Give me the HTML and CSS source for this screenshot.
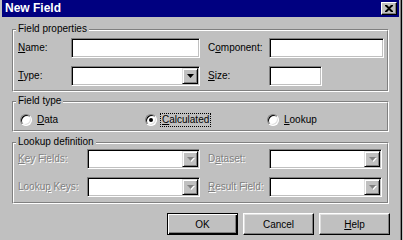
FILE: index.html
```html
<!DOCTYPE html>
<html>
<head>
<meta charset="utf-8">
<title>New Field</title>
<link rel="stylesheet" href="styles.css">
</head>
<body>
<div class="window">
  <div class="titlebar">
    <span class="title">New Field</span>
    <span class="close"><svg width="8" height="7" viewBox="0 0 8 7"><path d="M0 0h2l2 2 2-2h2v1L5.2 3.5 8 6v1H6L4 5 2 7H0V6l2.8-2.5L0 1z" fill="#000"/></svg></span>
  </div>
  <div class="content">
    <div class="group g1">
      <span class="legend">Field properties</span>
      <div class="group-inner grid grid1">
        <label class="lbl"><u>N</u>ame:</label>
        <div class="field w-main"></div>
        <label class="lbl">C<u>o</u>mponent:</label>
        <div class="field w-right"></div>
        <label class="lbl"><u>T</u>ype:</label>
        <div class="field combo w-main"><span class="drop"><svg width="7" height="4" viewBox="0 0 7 4"><path d="M0 0h7L3.5 4z" fill="#000"/></svg></span></div>
        <label class="lbl"><u>S</u>ize:</label>
        <div class="field w-size"></div>
      </div>
    </div>

    <div class="group g2">
      <span class="legend">Field type</span>
      <div class="group-inner radios">
        <div class="radio"><span class="dot"></span><span class="rtext"><u>D</u>ata</span></div>
        <div class="radio checked"><span class="dot"></span><span class="rtext focus"><u>C</u>alculated</span></div>
        <div class="radio"><span class="dot"></span><span class="rtext"><u>L</u>ookup</span></div>
      </div>
    </div>

    <div class="group g3">
      <span class="legend">Lookup definition</span>
      <div class="group-inner grid grid3">
        <label class="lbl disabled"><u>K</u>ey Fields:</label>
        <div class="field combo w-lk"><span class="drop off"><svg width="7" height="4" viewBox="0 0 7 4"><path d="M0 0h7L3.5 4z" fill="#808080"/></svg></span></div>
        <label class="lbl disabled">D<u>a</u>taset:</label>
        <div class="field combo w-lk"><span class="drop off"><svg width="7" height="4" viewBox="0 0 7 4"><path d="M0 0h7L3.5 4z" fill="#808080"/></svg></span></div>
        <label class="lbl disabled">Looku<u>p</u> Keys:</label>
        <div class="field combo w-lk"><span class="drop off"><svg width="7" height="4" viewBox="0 0 7 4"><path d="M0 0h7L3.5 4z" fill="#808080"/></svg></span></div>
        <label class="lbl disabled"><u>R</u>esult Field:</label>
        <div class="field combo w-lk"><span class="drop off"><svg width="7" height="4" viewBox="0 0 7 4"><path d="M0 0h7L3.5 4z" fill="#808080"/></svg></span></div>
      </div>
    </div>

    <div class="buttons">
      <button class="btn default">OK</button>
      <button class="btn">Cancel</button>
      <button class="btn"><u>H</u>elp</button>
    </div>
  </div>
</div>
</body>
</html>
```
FILE: styles.css
```css
* { box-sizing: border-box; }
html, body { margin: 0; padding: 0; }
body {
  width: 403px;
  height: 240px;
  overflow: hidden;
  background: #c0c0c0;
  font-family: "Liberation Sans", Arial, sans-serif;
  font-size: 10px;
  color: #000;
}
u { text-decoration: underline; text-underline-offset: 1px; }

.window {
  width: 402px;
  height: 240px;
  padding: 0 2px;
  border-right: 1px solid #000;
  box-shadow: inset -1px 0 0 #808080;
}

.titlebar {
  height: 17px;
  background: #000080;
  color: #fff;
  display: flex;
  align-items: center;
  justify-content: space-between;
  padding: 0 2px 0 3px;
}
.title { font-weight: bold; font-size: 12px; line-height: 17px; }
.close {
  width: 16px;
  height: 13px;
  background: #c0c0c0;
  border: 1px solid;
  border-color: #fff #000 #000 #fff;
  box-shadow: inset -1px -1px 0 #808080;
  display: flex;
  align-items: center;
  justify-content: center;
}

.content { padding: 0 10px; }

.group {
  position: relative;
  border: 1px solid;
  border-color: #808080 #fff #fff #808080;
}
.group-inner {
  border: 1px solid;
  border-color: #fff #808080 #808080 #fff;
}
.legend {
  position: absolute;
  top: -7px;
  left: 3px;
  padding: 0 2px;
  background: #c0c0c0;
  line-height: 12px;
}
.g1 { margin-top: 12px; }
.g2 { margin-top: 9px; }
.g3 { margin-top: 10px; }

.grid {
  display: grid;
  align-items: center;
  row-gap: 8px;
  padding-left: 4px;
}
.grid1 {
  grid-template-columns: 53px 137px 61px 115px;
  padding-top: 7px;
  padding-bottom: 4px;
}
.grid3 {
  grid-template-columns: 69px 121px 61px 115px;
  padding-top: 5px;
  padding-bottom: 5px;
}
.lbl { white-space: nowrap; line-height: 12px; }
.lbl.disabled { color: #808080; text-shadow: 1px 1px 0 #fff; }
.lbl.disabled u { text-decoration-color: #808080; }

.field {
  height: 20px;
  background: #fff;
  border: 1px solid;
  border-color: #808080 #fff #fff #808080;
  box-shadow: inset 1px 1px 0 #000, inset -1px -1px 0 #c0c0c0;
}
.w-main { width: 129px; }
.w-right { width: 115px; }
.w-size { width: 53px; }
.w-lk { width: 113px; }

.combo {
  display: flex;
  justify-content: flex-end;
  padding: 1px;
}
.drop {
  width: 16px;
  height: 16px;
  background: #c0c0c0;
  border: 1px solid;
  border-color: #dfdfdf #000 #000 #dfdfdf;
  box-shadow: inset 1px 1px 0 #fff, inset -1px -1px 0 #808080;
  display: flex;
  align-items: center;
  justify-content: center;
}
.drop.off svg { filter: drop-shadow(1px 1px 0 #fff); }

.radios {
  display: grid;
  grid-template-columns: 125px 122px auto;
  padding: 10px 0 4px 6px;
}
.radio {
  display: flex;
  align-items: center;
  gap: 3px;
  height: 13px;
}
.dot {
  width: 12px;
  height: 12px;
  border-radius: 50%;
  background: #fff;
  border: 1px solid;
  border-color: #808080 #fff #fff #808080;
  box-shadow: inset 1px 1px 0 #000, inset -1px -1px 0 #dfdfdf;
  display: flex;
  align-items: center;
  justify-content: center;
}
.radio.checked .dot::after {
  content: "";
  width: 4px;
  height: 4px;
  border-radius: 50%;
  background: #000;
}
.rtext { line-height: 12px; padding: 0 1px; border: 1px solid transparent; }
.rtext.focus { border: 1px dotted #000; }

.buttons {
  display: flex;
  justify-content: flex-end;
  gap: 5px;
  margin-top: 9px;
  margin-right: -1px;
}
.btn {
  width: 71px;
  height: 22px;
  padding: 0;
  font: inherit;
  font-size: 10px;
  color: #000;
  background: #c0c0c0;
  border: 1px solid;
  border-color: #fff #000 #000 #fff;
  box-shadow: inset -1px -1px 0 #808080, inset 1px 1px 0 #dfdfdf;
}
.btn.default {
  border: 1px solid #000;
  box-shadow: inset 1px 1px 0 #fff, inset -1px -1px 0 #000, inset -2px -2px 0 #808080;
}
```
